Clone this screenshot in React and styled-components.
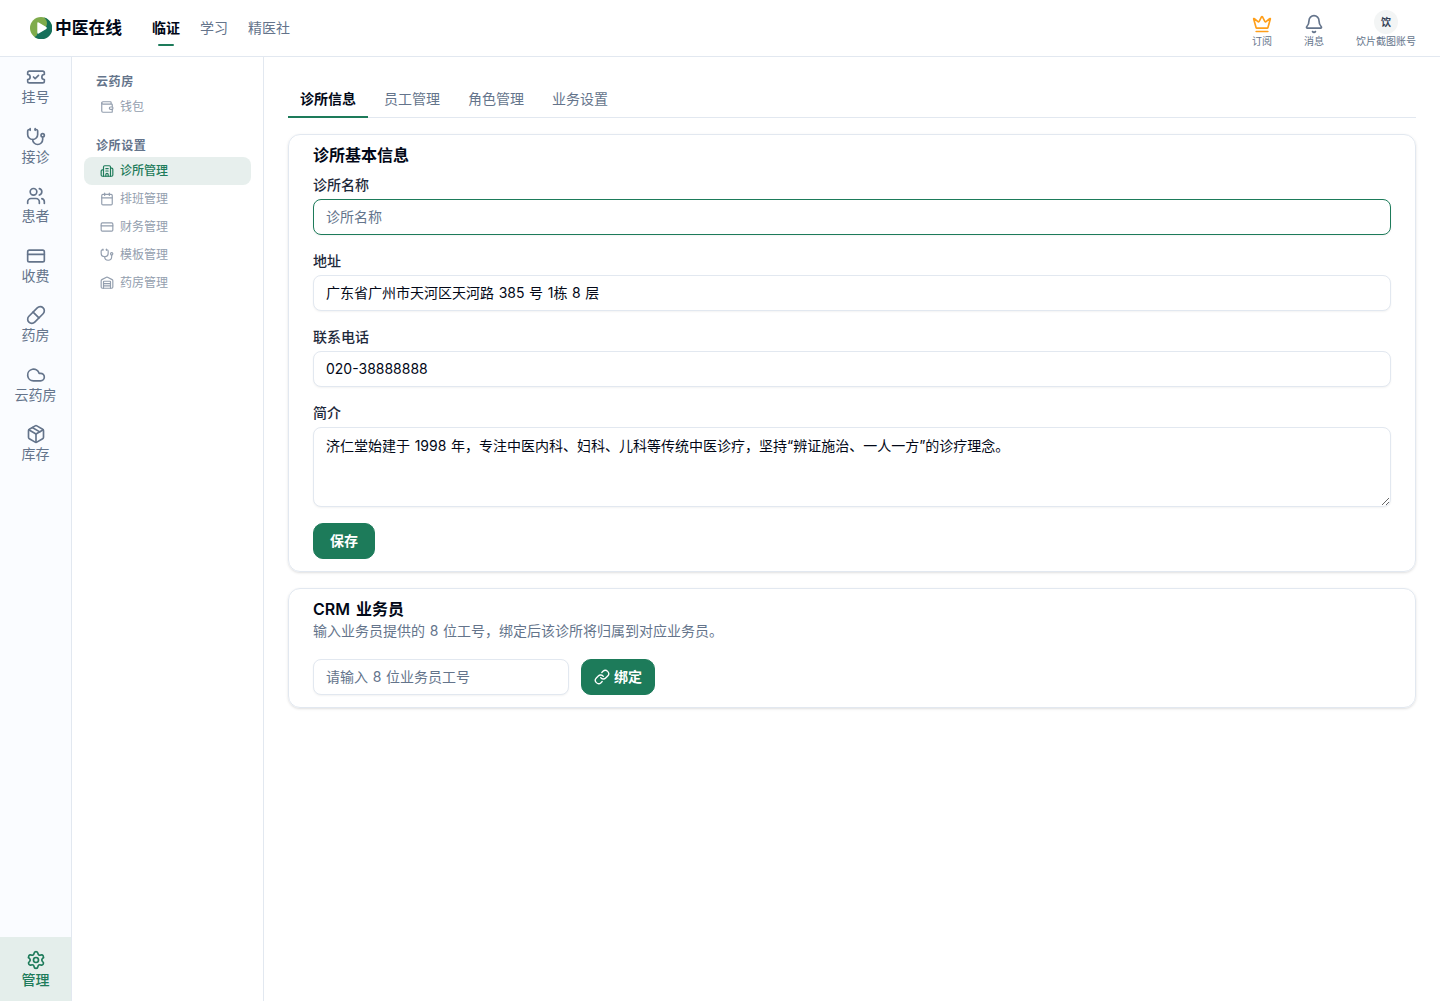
import React from 'react';
import styled, { createGlobalStyle, css } from 'styled-components';
import {
    Bell,
    Building2,
    Calendar,
    Cloud,
    CreditCard,
    Crown,
    Link,
    Package,
    Pill,
    Settings,
    Stethoscope,
    TicketCheck,
    Users,
    Wallet,
    Warehouse,
} from 'lucide-react';

const railItems = [
    { icon: TicketCheck, label: '挂号' },
    { icon: Stethoscope, label: '接诊' },
    { icon: Users, label: '患者' },
    { icon: CreditCard, label: '收费' },
    { icon: Pill, label: '药房' },
    { icon: Cloud, label: '云药房' },
    { icon: Package, label: '库存' },
];

const menuGroups = [
    { title: '云药房', items: [{ icon: Wallet, label: '钱包' }] },
    {
        title: '诊所设置',
        items: [
            { icon: Building2, label: '诊所管理', active: true },
            { icon: Calendar, label: '排班管理' },
            { icon: CreditCard, label: '财务管理' },
            { icon: Stethoscope, label: '模板管理' },
            { icon: Warehouse, label: '药房管理' },
        ],
    },
];

const Logo = () => (
    <svg width="22" height="22" viewBox="0 0 22 22">
        <circle cx="11" cy="11" r="11" fill="#7fab4b" />
        <path d="M14 .6A11 11 0 1 1 4.500 19.900C7 19.500 7.600 17.500 7.300 15L15 11C18 8 17.500 3 14 .6z" fill="#16705a" />
        <path d="M7.300 6.300q0-1.500 1.400-.8l7.600 4.600q1.200.9 0 1.800l-7.600 4.600q-1.400.6-1.400-.8z" fill="#fff" />
    </svg>
);

function App() {
    return (
        <>
            <GlobalStyle />
            <Page>
                <Header>
                    <Brand>
                        <Logo />
                        <span>中医在线</span>
                    </Brand>
                    <TopNav>
                        <TopLink $active>临证</TopLink>
                        <TopLink>学习</TopLink>
                        <TopLink>精医社</TopLink>
                    </TopNav>
                    <HeaderActions>
                        <Action $color="#ff9f1a">
                            <Crown size={20} />
                            <span>订阅</span>
                        </Action>
                        <Action>
                            <Bell size={20} />
                            <span>消息</span>
                        </Action>
                        <Action>
                            <Avatar>饮</Avatar>
                            <span>饮片截图账号</span>
                        </Action>
                    </HeaderActions>
                </Header>
                <Body>
                    <Rail>
                        {railItems.map(({ icon: Icon, label }) => (
                            <RailItem key={label}>
                                <Icon size={20} />
                                <span>{label}</span>
                            </RailItem>
                        ))}
                        <RailFooter>
                            <Settings size={20} />
                            <span>管理</span>
                        </RailFooter>
                    </Rail>
                    <SideMenu>
                        {menuGroups.map((group) => (
                            <MenuGroup key={group.title}>
                                <MenuTitle>{group.title}</MenuTitle>
                                {group.items.map(({ icon: Icon, label, active }) => (
                                    <MenuItem key={label} $active={active}>
                                        <Icon size={14} />
                                        <span>{label}</span>
                                    </MenuItem>
                                ))}
                            </MenuGroup>
                        ))}
                    </SideMenu>
                    <Main>
                        <Tabs>
                            <Tab $active>诊所信息</Tab>
                            <Tab>员工管理</Tab>
                            <Tab>角色管理</Tab>
                            <Tab>业务设置</Tab>
                        </Tabs>
                        <Card>
                            <CardTitle>诊所基本信息</CardTitle>
                            <Field>
                                <Label htmlFor="name">诊所名称</Label>
                                <Input id="name" placeholder="诊所名称" $focused />
                            </Field>
                            <Field>
                                <Label htmlFor="address">地址</Label>
                                <Input id="address" defaultValue="广东省广州市天河区天河路 385 号 1栋 8 层" />
                            </Field>
                            <Field>
                                <Label htmlFor="phone">联系电话</Label>
                                <Input id="phone" defaultValue="020-38888888" />
                            </Field>
                            <Field>
                                <Label htmlFor="intro">简介</Label>
                                <TextArea
                                    id="intro"
                                    defaultValue="济仁堂始建于 1998 年，专注中医内科、妇科、儿科等传统中医诊疗，坚持“辨证施治、一人一方”的诊疗理念。"
                                />
                            </Field>
                            <Button $padding="16px">保存</Button>
                        </Card>
                        <Card>
                            <CardTitle>CRM 业务员</CardTitle>
                            <CardText>输入业务员提供的 8 位工号，绑定后该诊所将归属到对应业务员。</CardText>
                            <BindRow>
                                <Input $width="256px" placeholder="请输入 8 位业务员工号" />
                                <Button $padding="12px">
                                    <Link size={16} />
                                    绑定
                                </Button>
                            </BindRow>
                        </Card>
                    </Main>
                </Body>
            </Page>
        </>
    );
}

const GlobalStyle = createGlobalStyle`
    * {
        box-sizing: border-box;
    }
    body {
        margin: 0;
        background: #fff;
        color: #020817;
        font-family: Inter, 'Noto Sans CJK SC', sans-serif;
        font-size: 14px;
        line-height: 20px;
        word-spacing: 0.7px;
    }
    input, textarea, button {
        font: inherit;
        color: inherit;
        word-spacing: inherit;
        margin: 0;
    }
    svg {
        flex-shrink: 0;
    }
`;

const Page = styled.div`
    display: flex;
    flex-direction: column;
    height: 100vh;
`;

const Header = styled.header`
    display: flex;
    align-items: center;
    height: 57px;
    padding: 0 24px 0 30px;
    border-bottom: 1px solid #e2e8f0;
    flex-shrink: 0;
`;

const Brand = styled.div`
    display: flex;
    align-items: center;
    gap: 3px;
    width: 122px;
    font-size: 16.8px;
    font-weight: 600;
    white-space: nowrap;
`;

const TopNav = styled.nav`
    display: flex;
    gap: 20px;
    height: 100%;
`;

const TopLink = styled.a`
    display: flex;
    flex-direction: column;
    align-items: center;
    padding-top: 18px;
    color: #64748b;

    ${({ $active }) => $active && css`
        color: #020817;
        font-weight: 600;

        &::after {
            content: '';
            width: 16px;
            height: 2px;
            margin-top: 6px;
            border-radius: 1px;
            background: #1d7b5a;
        }
    `}
`;

const HeaderActions = styled.div`
    display: flex;
    align-items: flex-end;
    gap: 32px;
    margin-left: auto;
    padding-top: 1px;
`;

const Action = styled.div`
    display: flex;
    flex-direction: column;
    align-items: center;
    gap: 1px;
    color: #64748b;
    font-size: 10px;
    line-height: 12px;

    svg {
        color: ${({ $color }) => $color || 'inherit'};
    }
`;

const Avatar = styled.div`
    display: flex;
    align-items: center;
    justify-content: center;
    width: 24px;
    height: 24px;
    border-radius: 50%;
    background: #f3f5f5;
    color: #334155;
    font-weight: 600;
`;

const Body = styled.div`
    display: flex;
    flex: 1;
    min-height: 0;
`;

const Rail = styled.aside`
    display: flex;
    flex-direction: column;
    width: 72px;
    border-right: 1px solid #e2e8f0;
    background: #fafcff;
`;

const RailItem = styled.a`
    display: flex;
    flex-direction: column;
    align-items: center;
    height: 59.5px;
    padding-top: 10px;
    color: #64748b;
`;

const RailFooter = styled(RailItem)`
    height: 64px;
    margin-top: auto;
    padding-top: 13px;
    background: #e4eeeb;
    color: #1d7b5a;
    font-weight: 500;
`;

const SideMenu = styled.aside`
    display: flex;
    flex-direction: column;
    gap: 12px;
    width: 192px;
    padding: 12px;
    border-right: 1px solid #e2e8f0;
`;

const MenuGroup = styled.div`
    display: flex;
    flex-direction: column;
`;

const MenuTitle = styled.div`
    height: 24px;
    padding: 0 12px;
    color: #64748b;
    font-size: 12px;
    font-weight: 600;
    line-height: 25px;
    letter-spacing: 0.6px;
`;

const MenuItem = styled.a`
    display: flex;
    align-items: center;
    gap: 6px;
    height: 28px;
    padding: 0 16px;
    border-radius: 8px;
    background: ${({ $active }) => ($active ? '#e7efed' : 'transparent')};
    color: ${({ $active }) => ($active ? '#1d7b5a' : '#939eae')};
    font-size: 12px;
    font-weight: ${({ $active }) => ($active ? 500 : 400)};
`;

const Main = styled.main`
    display: flex;
    flex-direction: column;
    gap: 16px;
    flex: 1;
    padding: 24px;
`;

const Tabs = styled.div`
    display: flex;
    gap: 4px;
    height: 37px;
    border-bottom: 1px solid #e2e8f0;
`;

const Tab = styled.button`
    height: 37px;
    padding: 0 12px;
    border: 0;
    border-bottom: 2px solid ${({ $active }) => ($active ? '#1d7b5a' : 'transparent')};
    background: none;
    color: ${({ $active }) => ($active ? '#020817' : '#64748b')};
    font-weight: ${({ $active }) => ($active ? 600 : 400)};
`;

const Card = styled.section`
    display: flex;
    flex-direction: column;
    align-items: flex-start;
    padding: 8px 24px 12px;
    border: 1px solid #e2e8f0;
    border-radius: 12px;
    box-shadow: 0 1px 3px rgba(0, 0, 0, 0.1), 0 1px 2px -1px rgba(0, 0, 0, 0.1);
`;

const CardTitle = styled.h3`
    margin: 0;
    font-size: 16px;
    font-weight: 600;
    line-height: 24px;
    word-spacing: 2px;
`;

const CardText = styled.p`
    margin: 0 0 18px;
    color: #64748b;
`;

const Field = styled.div`
    display: flex;
    flex-direction: column;
    gap: 4px;
    width: 100%;
    margin-bottom: 16px;

    ${CardTitle} + & {
        margin-top: 8px;
    }
`;

const Label = styled.label`
    color: #1e293b;
    font-weight: 500;
`;

const control = css`
    display: block;
    width: ${({ $width }) => $width || '100%'};
    border: 1px solid ${({ $focused }) => ($focused ? '#1d7b5a' : '#e2e8f0')};
    border-radius: 8px;
    outline: none;
    background: #fff;
    box-shadow: 0 1px 2px rgba(0, 0, 0, 0.05);

    &::placeholder {
        color: #64748b;
    }
`;

const Input = styled.input`
    ${control}
    height: 36px;
    padding: 0 12px 2px;
`;

const TextArea = styled.textarea`
    ${control}
    height: 80px;
    padding: 8px 12px;
`;

const BindRow = styled.div`
    display: flex;
    gap: 12px;
`;

const Button = styled.button`
    display: flex;
    align-items: center;
    gap: 4px;
    height: 36px;
    padding: 0 ${({ $padding }) => $padding};
    border: 1px solid #1d7b5a;
    border-radius: 10px;
    background: #1d7b5a;
    color: #fff;
    font-weight: 600;
`;

export default App;
